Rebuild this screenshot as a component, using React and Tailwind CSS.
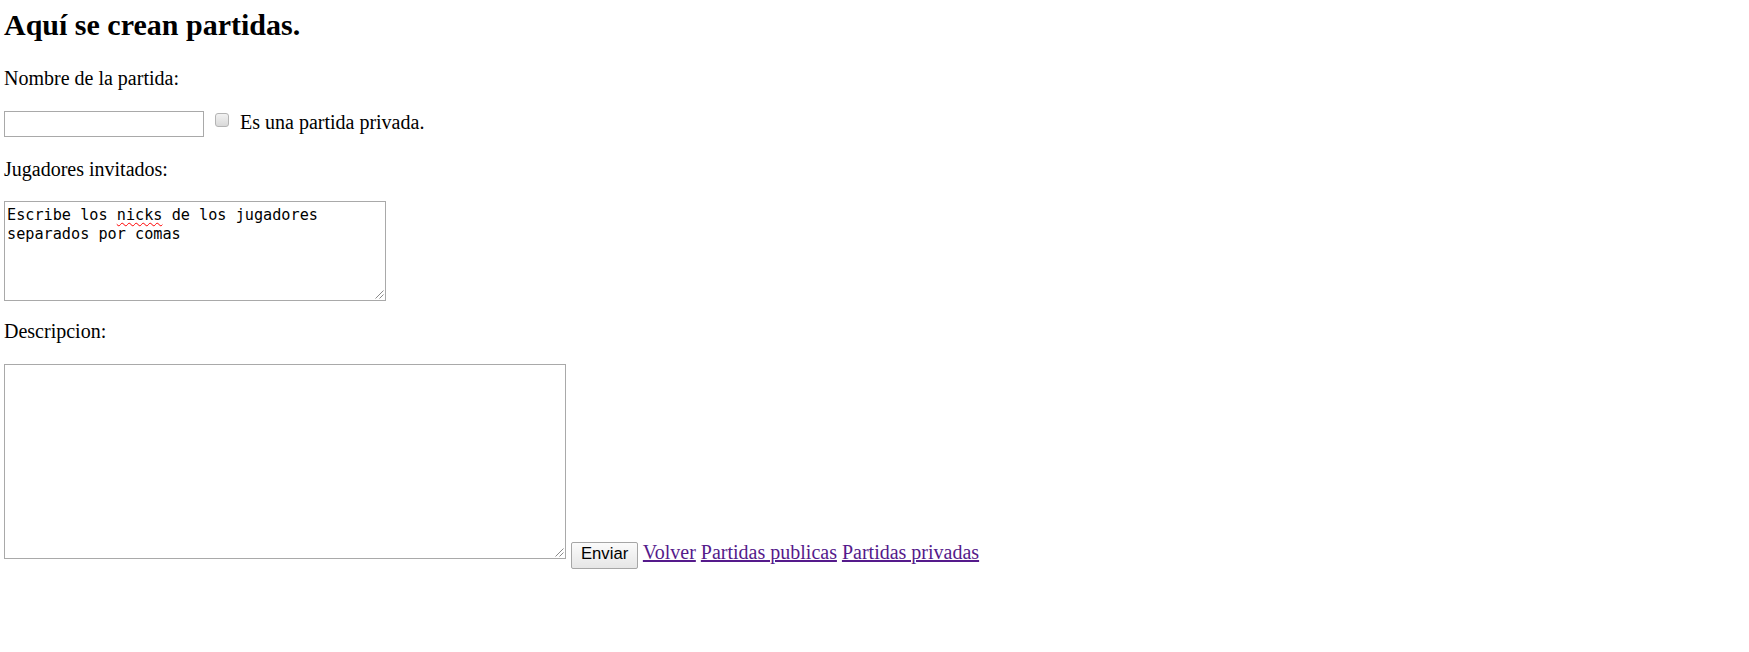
const serif = "font-['Liberation_Serif','Times_New_Roman',serif]"

const ResizeGrip = () => (
  <svg className="absolute right-[1px] bottom-[1px]" width="10" height="10" viewBox="0 0 10 10">
    <line x1="9.5" y1="1.5" x2="1.5" y2="9.5" stroke="#8a8a8a" strokeWidth="1" />
    <line x1="9.5" y1="5.5" x2="5.5" y2="9.5" stroke="#8a8a8a" strokeWidth="1" />
  </svg>
)

const App = () => {
  return (
    <div className={`min-h-[652px] w-full bg-white text-black pl-[4px] ${serif}`}>
      <div className="flex flex-col items-start">
        {/* Titulo */}
        <h2 className="mt-[8px] text-[30px] font-bold leading-[34px]">Aquí se crean partidas.</h2>

        <p className="mt-[25px] text-[20px] leading-[23px]">Nombre de la partida:</p>

        {/* Nombre + privada */}
        <div className="mt-[21px] flex items-start">
          <input
            type="text"
            className="h-[26px] w-[200px] border border-[#a9a9a9] bg-white outline-none"
          />
          <div className="mt-[2px] ml-[11px] h-[14px] w-[14px] rounded-[3px] border border-[#b4b4b4] bg-gradient-to-b from-[#f2f2f2] to-[#d9d9d9]" />
          <span className="ml-[11px] text-[20px] leading-[23px]">Es una partida privada.</span>
        </div>

        <p className="mt-[21px] text-[20px] leading-[23px]">Jugadores invitados:</p>

        {/* Jugadores */}
        <div className="relative mt-[20px] h-[100px] w-[382px] border border-[#a9a9a9] bg-white pt-[4px] pl-[2px] font-['DejaVu_Sans_Mono',monospace] text-[15.2px] leading-[19px]">
          <div>
            Escribe los{' '}
            <span className="underline decoration-wavy decoration-[#ff0000] decoration-1 underline-offset-[2px]">nicks</span>{' '}
            de los jugadores
          </div>
          <div>separados por comas</div>
          <ResizeGrip />
        </div>

        <p className="mt-[19px] text-[20px] leading-[23px]">Descripcion:</p>

        {/* Descripcion + acciones */}
        <div className="mt-[21px] flex items-baseline">
          <div className="relative h-[195px] w-[562px] border border-[#a9a9a9] bg-white">
            <ResizeGrip />
          </div>
          <button className="ml-[5px] rounded-[2px] border border-[#a6a6a6] bg-gradient-to-b from-[#fbfbfb] to-[#e6e6e6] px-[9px] pt-[1px] pb-[5px] font-['Liberation_Sans',Arial,sans-serif] text-[16.67px] leading-[19px] text-black">
            Enviar
          </button>
          <span className="text-[20px] leading-[23px] whitespace-pre">
            {' '}
            <a href="#" className="text-[#551a8b] underline">Volver</a>{' '}
            <a href="#" className="text-[#551a8b] underline">Partidas publicas</a>{' '}
            <a href="#" className="text-[#551a8b] underline">Partidas privadas</a>
          </span>
        </div>
      </div>
    </div>
  )
}

export default App
